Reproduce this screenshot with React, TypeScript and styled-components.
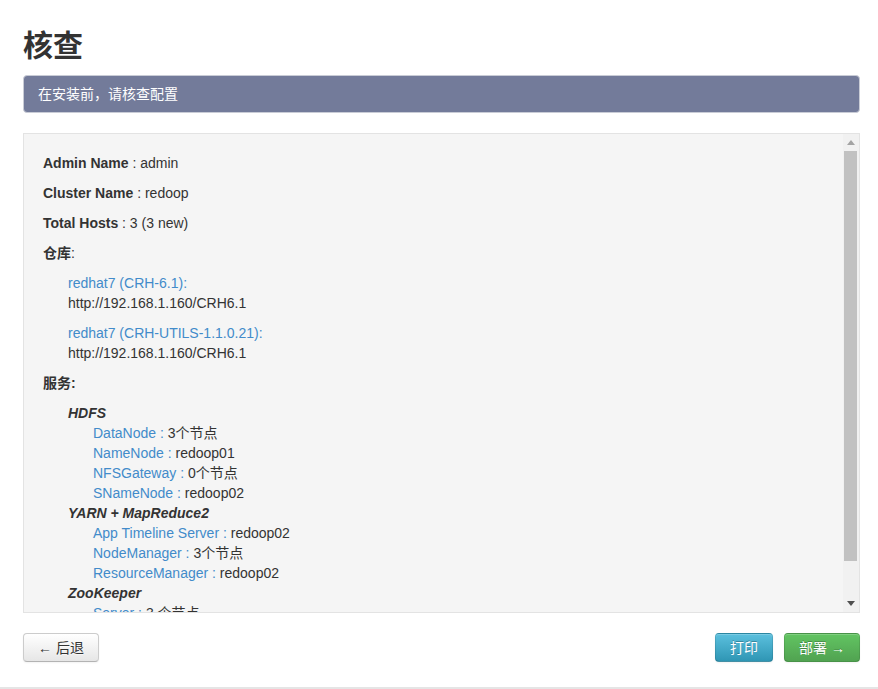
import React from "react";
import styled, { createGlobalStyle } from "styled-components";

const GlobalStyle = createGlobalStyle`
  html, body { margin: 0; padding: 0; background: #fff; }
  body {
    font-family: "Liberation Sans", Arial, "Noto Sans CJK SC", sans-serif;
    font-size: 14px;
    line-height: 20px;
    color: #333;
  }
  * { box-sizing: border-box; }
`;

const Page = styled.div`
  padding: 27px 18px 0 23px;
  display: flex;
  flex-direction: column;
`;

const Title = styled.h2`
  margin: 0;
  font-family: "Noto Sans CJK SC", "Liberation Sans", sans-serif;
  font-size: 30px;
  line-height: 33px;
  font-weight: 700;
  color: #333;
`;

const Alert = styled.div`
  margin-top: 15px;
  padding: 8px 14px;
  line-height: 20px;
  font-size: 14px;
  color: #fff;
  background: #737b9a;
  border: 1px solid #c9ccd6;
  border-radius: 4px;
`;

const ReviewFrame = styled.div`
  position: relative;
  margin-top: 20px;
  height: 480px;
  background: #f5f5f5;
  border: 1px solid #e3e3e3;
  overflow: hidden;
`;

const ReviewScroll = styled.div`
  height: 100%;
  overflow-y: auto;
  padding: 19px 36px 18px 19px;
  scrollbar-width: none;
  &::-webkit-scrollbar { display: none; }
`;

const ScrollTrack = styled.div`
  position: absolute;
  top: 0;
  right: 0;
  bottom: 0;
  width: 16px;
  background: #f1f1f1;
  display: flex;
  flex-direction: column;
  align-items: center;
`;

const ScrollArrow = styled.div`
  height: 17px;
  width: 100%;
  display: flex;
  align-items: center;
  justify-content: center;
  flex-shrink: 0;
`;

const ScrollThumb = styled.div`
  width: 13px;
  height: 410px;
  background: #c1c1c1;
  margin-left: -1px;
`;

const ScrollSpacer = styled.div`
  flex: 1;
`;

const Para = styled.p`
  margin: 0 0 10px;
`;

const Label = styled.b`
  font-weight: 700;
`;

const IndentBlock = styled.div<{ $level: number }>`
  margin: 0 0 10px;
  padding-left: ${(p) => p.$level * 25}px;
`;

const Link = styled.span`
  color: #428bca;
`;

const ServiceName = styled.div`
  font-weight: 700;
  font-style: italic;
`;

const ComponentRow = styled.div`
  padding-left: 25px;
`;

const Footer = styled.div`
  margin-top: 20px;
  display: flex;
  justify-content: space-between;
  align-items: center;
`;

const RightGroup = styled.div`
  display: flex;
  gap: 11px;
`;

const Button = styled.button<{ $variant?: "default" | "info" | "success" }>`
  font-family: "Liberation Sans", Arial, "Noto Sans CJK SC", sans-serif;
  font-size: 14px;
  line-height: 20px;
  height: 29px;
  padding: 3px 14px;
  border-radius: 4px;
  cursor: pointer;
  border: 1px solid;
  ${(p) =>
    p.$variant === "info"
      ? `
    color: #fff;
    text-shadow: 0 -1px 0 rgba(0,0,0,.25);
    background: linear-gradient(to bottom, #5bc0de, #2f96b4);
    border-color: rgba(0,0,0,.1) rgba(0,0,0,.1) rgba(0,0,0,.25);
  `
      : p.$variant === "success"
      ? `
    color: #fff;
    text-shadow: 0 -1px 0 rgba(0,0,0,.25);
    background: linear-gradient(to bottom, #62c462, #51a351);
    border-color: rgba(0,0,0,.1) rgba(0,0,0,.1) rgba(0,0,0,.25);
  `
      : `
    color: #333;
    text-shadow: 0 1px 1px rgba(255,255,255,.75);
    background: linear-gradient(to bottom, #ffffff, #e6e6e6);
    border-color: #cccccc #cccccc #b3b3b3;
  `}
  box-shadow: inset 0 1px 0 rgba(255,255,255,.2), 0 1px 2px rgba(0,0,0,.05);
`;

const BottomRule = styled.hr`
  margin: 25px 0 0;
  border: 0;
  border-top: 2px solid #e5e5e5;
`;

const repos = [
  { name: "redhat7 (CRH-6.1):", url: "http://192.168.1.160/CRH6.1" },
  { name: "redhat7 (CRH-UTILS-1.1.0.21):", url: "http://192.168.1.160/CRH6.1" },
];

const services = [
  {
    name: "HDFS",
    components: [
      ["DataNode", "3个节点"],
      ["NameNode", "redoop01"],
      ["NFSGateway", "0个节点"],
      ["SNameNode", "redoop02"],
    ],
  },
  {
    name: "YARN + MapReduce2",
    components: [
      ["App Timeline Server", "redoop02"],
      ["NodeManager", "3个节点"],
      ["ResourceManager", "redoop02"],
    ],
  },
  {
    name: "ZooKeeper",
    components: [["Server", "3 个节点"]],
  },
];

export default function App() {
  return (
    <>
      <GlobalStyle />
      <Page>
        <Title>核查</Title>
        <Alert>在安装前，请核查配置</Alert>
        <ReviewFrame>
          <ReviewScroll>
            <Para>
              <Label>Admin Name</Label> : admin
            </Para>
            <Para>
              <Label>Cluster Name</Label> : redoop
            </Para>
            <Para>
              <Label>Total Hosts</Label> : 3 (3 new)
            </Para>
            <Para>
              <Label>仓库</Label>:
            </Para>
            {repos.map((r, i) => (
              <IndentBlock $level={1} key={i}>
                <Link>{r.name}</Link>
                <div>{r.url}</div>
              </IndentBlock>
            ))}
            <Para>
              <Label>服务:</Label>
            </Para>
            <IndentBlock $level={1}>
              {services.map((s) => (
                <div key={s.name}>
                  <ServiceName>{s.name}</ServiceName>
                  {s.components.map(([c, v]) => (
                    <ComponentRow key={c}>
                      <Link>{c} :</Link> {v}
                    </ComponentRow>
                  ))}
                </div>
              ))}
            </IndentBlock>
          </ReviewScroll>
          <ScrollTrack>
            <ScrollArrow>
              <svg width="8" height="5" viewBox="0 0 8 5">
                <polygon points="0,5 8,5 4,0" fill="#a3a3a3" />
              </svg>
            </ScrollArrow>
            <ScrollThumb />
            <ScrollSpacer />
            <ScrollArrow>
              <svg width="8" height="5" viewBox="0 0 8 5">
                <polygon points="0,0 8,0 4,5" fill="#505050" />
              </svg>
            </ScrollArrow>
          </ScrollTrack>
        </ReviewFrame>
        <Footer>
          <Button>← 后退</Button>
          <RightGroup>
            <Button $variant="info">打印</Button>
            <Button $variant="success">部署 →</Button>
          </RightGroup>
        </Footer>
      </Page>
      <BottomRule />
    </>
  );
}
